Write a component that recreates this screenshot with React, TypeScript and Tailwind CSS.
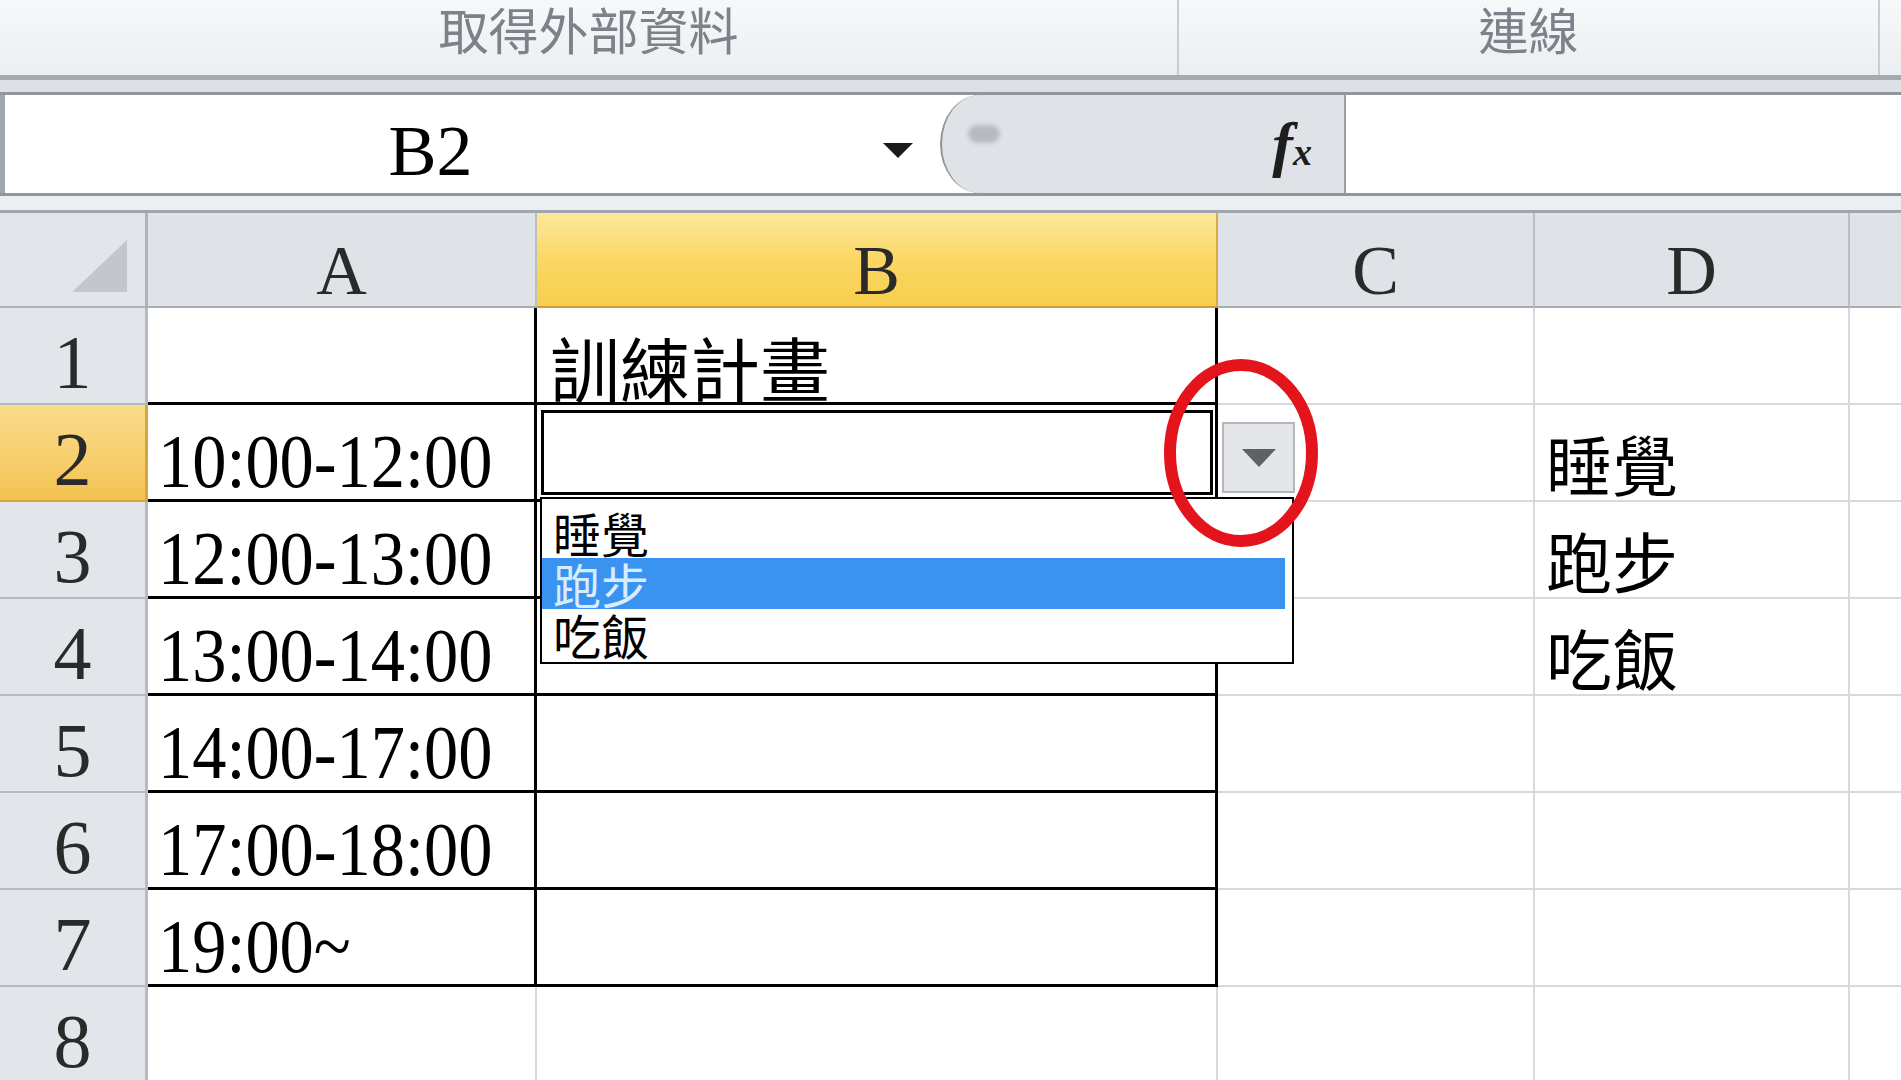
import React from 'react';

const SERIF = "font-['Liberation_Serif','Times_New_Roman',serif]";
const CJK = "font-['Noto_Sans_CJK_TC','Noto_Sans_CJK_SC',sans-serif]";

type Row = { n: number; a?: string; b?: string; d?: string };

const rows: Row[] = [
  { n: 1, b: '訓練計畫' },
  { n: 2, a: '10:00-12:00', d: '睡覺' },
  { n: 3, a: '12:00-13:00', d: '跑步' },
  { n: 4, a: '13:00-14:00', d: '吃飯' },
  { n: 5, a: '14:00-17:00' },
  { n: 6, a: '17:00-18:00' },
  { n: 7, a: '19:00~' },
  { n: 8 },
];

function HeaderCell({ label, w, active }: { label: string; w: string; active?: boolean }) {
  return (
    <div
      className={`flex ${w} items-end justify-center border-b-2 border-r-2 ${
        active
          ? 'border-r-[#d8ab44] border-b-[#cf9c30] bg-linear-to-b from-[#fde79c] via-[#fbd863] to-[#f7cd4c]'
          : 'border-r-[#b9bec5] border-b-[#a9aeb5] bg-[#dfe2e7]'
      }`}
    >
      <span className={`${SERIF} text-[70px] leading-none text-[#2a2a2a]`}>{label}</span>
    </div>
  );
}

export default function App() {
  return (
    <div className="relative h-[1080px] w-[1901px] overflow-hidden bg-white">
      {/* Ribbon group labels */}
      <div className="flex h-[75px] bg-linear-to-b from-[#f7f8fa] to-[#eceef1]">
        <div className="flex w-[1179px] justify-center border-r-2 border-[#c9cdd3]">
          <span className={`${CJK} pt-[3px] text-[50px] leading-none text-[#7c818a]`}>取得外部資料</span>
        </div>
        <div className="flex w-[701px] justify-center border-r-2 border-[#c9cdd3]">
          <span className={`${CJK} pt-[3px] text-[50px] leading-none text-[#7c818a]`}>連線</span>
        </div>
        <div className="flex-1" />
      </div>
      <div className="h-[5px] bg-[#a5aab1]" />
      <div className="h-[12px] bg-[#dde0e4]" />

      {/* Formula bar */}
      <div className="flex h-[104px] border-y-[3px] border-[#90969d] bg-white">
        <div className="flex w-[940px] border-l-[5px] border-[#a2a7ae]">
          <div className="flex w-[851px] justify-center pt-[20px]">
            <span className={`${SERIF} text-[72px] leading-none text-black`}>B2</span>
          </div>
          <div className="flex items-start pl-[27px] pt-[48px]">
            <svg width="30" height="15" viewBox="0 0 30 15">
              <polygon points="0,0 30,0 15,15" fill="#1a1a1a" />
            </svg>
          </div>
        </div>
        <div className="relative flex w-[404px] items-start justify-end rounded-l-[40px_49px] border-l-2 border-[#8f959c] bg-[#dfe3e8] pr-[32px] pt-[18px]">
          <div className="absolute left-[26px] top-[30px] h-[18px] w-[32px] rounded-full bg-[#b7bbc1] blur-[2px]" />
          <span className={`${SERIF} text-[62px] font-bold italic leading-none text-[#1e1e1e]`}>
            f<span className="text-[38px]">x</span>
          </span>
        </div>
        <div className="flex-1 border-l-2 border-[#9aa0a7]" />
      </div>
      <div className="h-[14px] bg-[#eceef1]" />
      <div className="h-[3px] bg-[#a1a6ad]" />

      {/* Column headers */}
      <div className="flex h-[95px]">
        <div className="relative w-[148px] border-b-2 border-r-[3px] border-[#aeb3ba] bg-[#e2e5e9]">
          <svg className="absolute left-0 top-0" width="145" height="93" viewBox="0 0 145 93">
            <polygon points="72,79 127,27 127,79" fill="#c3c7cd" />
          </svg>
        </div>
        <HeaderCell label="A" w="w-[389px]" />
        <HeaderCell label="B" w="w-[681px]" active />
        <HeaderCell label="C" w="w-[317px]" />
        <HeaderCell label="D" w="w-[315px]" />
        <div className="flex-1 border-b-2 border-[#a9aeb5] bg-[#dfe2e7]" />
      </div>

      {/* Rows */}
      {rows.map((r) => {
        const black = r.n <= 7;
        const edge = black ? 'border-b-[3px] border-r-[3px] border-black' : 'border-b-2 border-r-2 border-[#d7dadd]';
        const active = r.n === 2;
        return (
          <div key={r.n} className="flex h-[97px]">
            <div
              className={`flex w-[148px] items-end justify-center border-b-2 border-r-[3px] pb-[3px] ${
                active
                  ? 'border-b-[#d5a640] border-r-[#d5a640] bg-linear-to-b from-[#fadd8c] to-[#f3c350]'
                  : 'border-[#b6bbc2] bg-[#e2e5e9]'
              }`}
            >
              <span className={`${SERIF} text-[76px] leading-none text-[#2a2a2a]`}>{r.n}</span>
            </div>
            <div className={`flex w-[389px] items-end overflow-hidden pl-[10px] ${edge}`}>
              {r.a && (
                <span className={`${SERIF} origin-left scale-x-90 whitespace-nowrap text-[76px] leading-none text-black`}>
                  {r.a}
                </span>
              )}
            </div>
            <div className={`relative flex w-[681px] items-end overflow-hidden pl-[13px] ${edge}`}>
              {r.b && <span className={`${CJK} text-[70px] leading-none text-black`}>{r.b}</span>}
              {active && (
                <div className="absolute bottom-[4px] left-[4px] right-[2px] top-[5px] border-[3px] border-black" />
              )}
            </div>
            <div className="w-[317px] border-b-2 border-r-2 border-[#d7dadd]" />
            <div className="flex w-[315px] items-end border-b-2 border-r-2 border-[#d7dadd] pb-[5px] pl-[11px]">
              {r.d && <span className={`${CJK} text-[66px] leading-none text-black`}>{r.d}</span>}
            </div>
            <div className="flex-1 border-b-2 border-[#d7dadd]" />
          </div>
        );
      })}

      {/* Data validation dropdown button */}
      <div className="absolute left-[1222px] top-[422px] flex h-[71px] w-[73px] items-center justify-center border-2 border-[#b3b6bb] bg-[#e5e6e9]">
        <svg width="34" height="18" viewBox="0 0 34 18">
          <polygon points="0,0 34,0 17,18" fill="#5f6166" />
        </svg>
      </div>

      {/* Dropdown list */}
      <div className="absolute left-[540px] top-[497px] w-[754px] border-2 border-black bg-white pb-[2px] pt-[8px]">
        <div className={`${CJK} h-[51px] pl-[11px] text-[48px] leading-[51px] text-black`}>睡覺</div>
        <div className={`${CJK} mr-[7px] h-[51px] bg-[#3a93ef] pl-[11px] text-[48px] leading-[51px] text-[#d8ecff]`}>跑步</div>
        <div className={`${CJK} h-[51px] pl-[11px] text-[48px] leading-[51px] text-black`}>吃飯</div>
      </div>

      {/* Red annotation circle */}
      <svg className="pointer-events-none absolute left-0 top-0" width="1901" height="1080" viewBox="0 0 1901 1080">
        <ellipse cx="1241" cy="453" rx="71" ry="88" fill="none" stroke="#e3141c" strokeWidth="12" />
      </svg>
    </div>
  );
}
